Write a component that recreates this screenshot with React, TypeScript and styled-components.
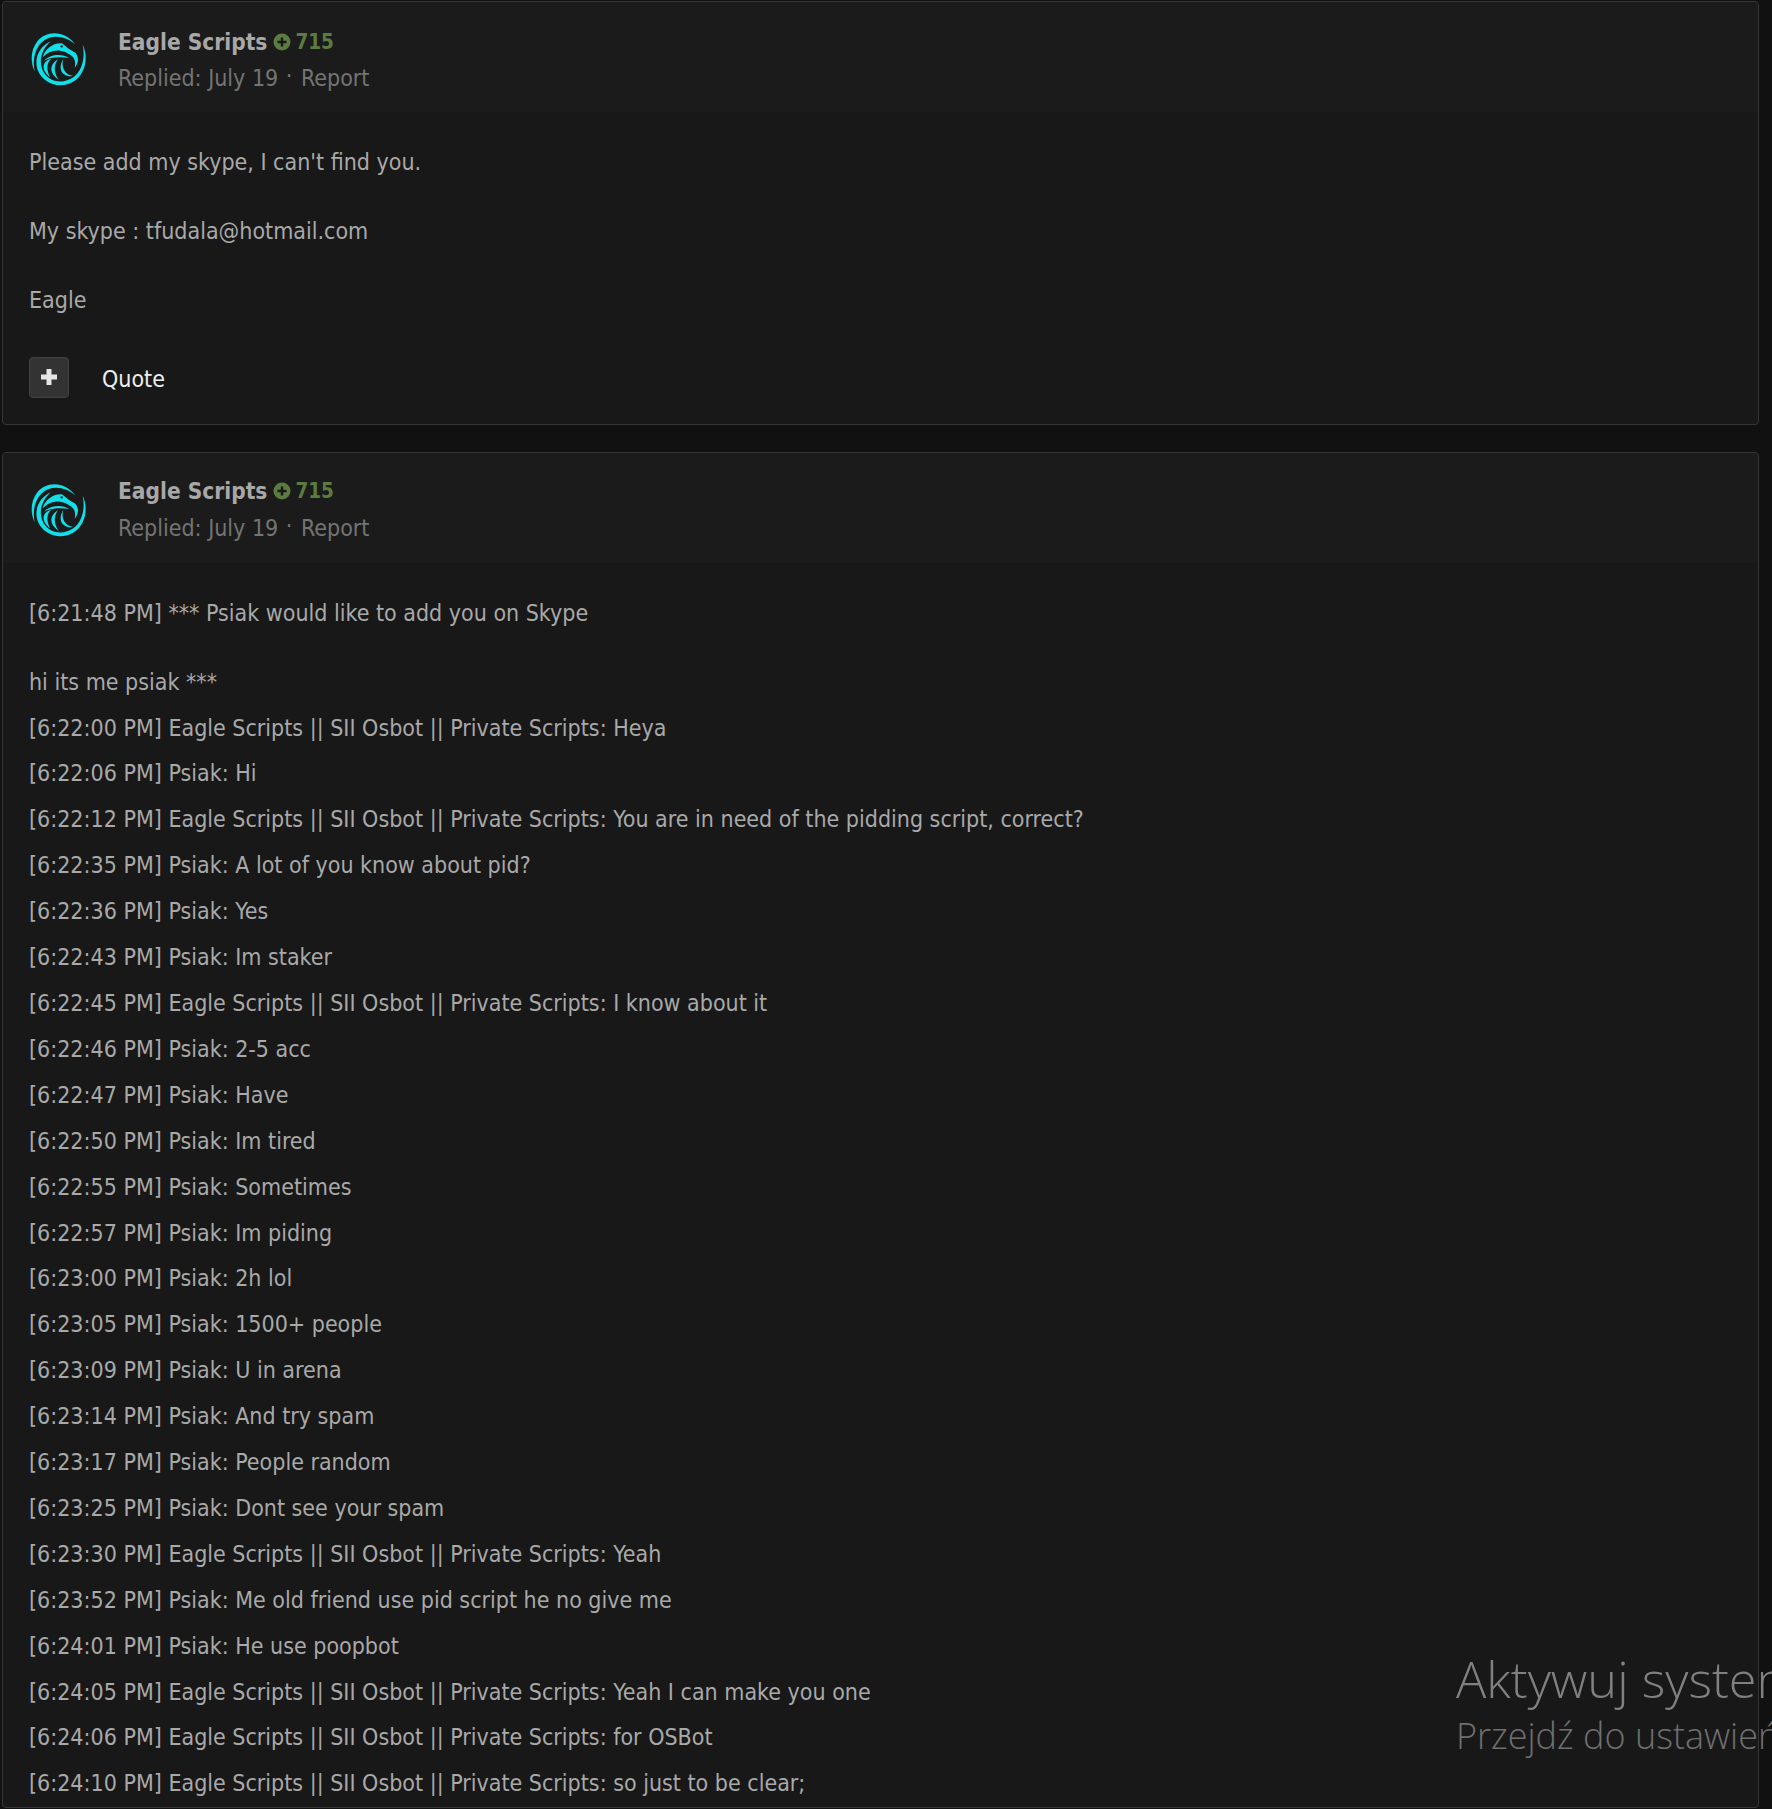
import React from "react";
import styled, { createGlobalStyle } from "styled-components";

const Global = createGlobalStyle`
  html, body { margin: 0; padding: 0; background: #111111; }
  body { font-family: "DejaVu Sans Condensed", "DejaVu Sans", sans-serif; font-stretch: condensed; }
`;

const Page = styled.div`
  position: relative;
  width: 1772px;
  height: 1809px;
  overflow: hidden;
  background: #111111;
  padding: 1px 13px 0 2px;
  box-sizing: border-box;
  display: flex;
  flex-direction: column;
  gap: 27px;
`;

const Card = styled.article`
  flex: none;
  background: #181818;
  border: 1px solid #363636;
  border-radius: 4px;
`;

const CardHeader = styled.header`
  height: 110px;
  box-sizing: border-box;
  display: flex;
  align-items: flex-start;
  padding: 26px 0 0 27px;
  gap: 30px;
  background: #1b1b1b;
  border-radius: 4px 4px 0 0;
`;

const Avatar = styled.svg`
  width: 58px;
  height: 58px;
  flex: none;
  margin-top: 2px;
`;

const Meta = styled.div<{ $lift: number }>`
  display: flex;
  flex-direction: column;
  gap: 9px;
  margin-top: ${(p) => p.$lift}px;
`;

const NameRow = styled.div`
  display: flex;
  align-items: center;
  gap: 6px;
  height: 27px;
`;

const Name = styled.span`
  font-size: 22.5px;
  font-weight: 700;
  color: #a8a8a8;
`;

const Rep = styled.span`
  display: inline-flex;
  align-items: center;
  gap: 4px;
  font-size: 20.5px;
  font-weight: 700;
  color: #5c7b40;
`;

const SubRow = styled.div`
  font-size: 23px;
  line-height: 28px;
  color: #747474;
`;

const Sep = styled.span`
  margin: 0 2px 0 1px;
  line-height: 0;
  vertical-align: 2px;
`;

const Body = styled.div`
  padding: 28px 26px 0;
  font-size: 23px;
  line-height: 45.9px;
  color: #a9a9a9;
`;

const Para = styled.p<{ $gap?: boolean }>`
  margin: 0 0 ${(p) => (p.$gap ? "23px" : "0")};
  white-space: nowrap;
`;

const Footer = styled.footer`
  display: flex;
  align-items: center;
  gap: 33px;
  padding: 33px 26px 26px;
`;

const PlusButton = styled.button`
  width: 40px;
  height: 41px;
  padding: 0;
  display: flex;
  align-items: center;
  justify-content: center;
  background: #333333;
  border: 1px solid #414141;
  border-radius: 4px;
`;

const Quote = styled.span`
  font-size: 23px;
  padding-top: 3px;
  color: #eeeeee;
`;

const Watermark = styled.div`
  position: absolute;
  left: 1456px;
  top: 1645px;
  white-space: nowrap;
  font-family: "Open Sans", sans-serif;
  font-weight: 300;
  font-stretch: normal;
`;

const WatermarkTitle = styled.div`
  font-size: 50.5px;
  line-height: 68px;
  color: #808080;
`;

const WatermarkSub = styled.div`
  font-size: 36px;
  line-height: 46px;
  color: #6f6f6f;
`;

const EagleLogo = () => (
  <Avatar viewBox="90 90 174 174" aria-hidden>
    <g fill="#10e0ea">
      <path d="M104 214 C90 185 92 150 112 124 C135 94 192 86 226 134 C196 106 150 102 124 128 C102 150 98 185 104 214 Z" />
      <path d="M248 134 C266 170 258 222 218 246 C178 268 130 250 114 212 C100 176 118 140 152 124 C128 146 116 176 126 206 C140 244 186 256 220 232 C248 212 256 170 248 134 Z" />
      <path d="M128 172 C134 148 158 128 186 130 L206 146 L226 158 C236 170 238 186 224 204 C228 186 224 172 210 164 L196 156 C170 146 146 152 128 172 Z" />
      <path d="M132 182 C150 162 186 160 208 174 C184 170 154 170 132 182 Z" />
      <path d="M150 232 C124 210 124 184 154 176 C138 190 140 210 150 232 Z" />
      <path d="M176 240 C148 220 146 196 174 178 C160 198 162 218 176 240 Z" />
      <path d="M220 228 C190 232 170 210 190 176 C182 204 196 224 220 228 Z" />
    </g>
    <circle cx="185" cy="139" r="3.5" fill="#1b1b1b" />
  </Avatar>
);

const PlusCircle = () => (
  <svg width="18" height="18" viewBox="0 0 18 18" aria-hidden>
    <circle cx="9" cy="9" r="8.5" fill="#5c7b40" />
    <path d="M9 4.5v9M4.5 9h9" stroke="#181818" strokeWidth="2.4" />
  </svg>
);

const PlusIcon = () => (
  <svg width="18" height="18" viewBox="0 0 18 18" aria-hidden>
    <path d="M9 1v16M1 9h16" stroke="#e6e6e6" strokeWidth="5" />
  </svg>
);

const PostHeader = ({ lift = 0 }: { lift?: number }) => (
  <CardHeader>
    <EagleLogo />
    <Meta $lift={lift}>
      <NameRow>
        <Name>Eagle Scripts</Name>
        <Rep>
          <PlusCircle />
          715
        </Rep>
      </NameRow>
      <SubRow>
        Replied: July 19 <Sep>·</Sep> Report
      </SubRow>
    </Meta>
  </CardHeader>
);

const chat: string[] = [
  "[6:22:00 PM] Eagle Scripts || SII Osbot || Private Scripts: Heya",
  "[6:22:06 PM] Psiak: Hi",
  "[6:22:12 PM] Eagle Scripts || SII Osbot || Private Scripts: You are in need of the pidding script, correct?",
  "[6:22:35 PM] Psiak: A lot of you know about pid?",
  "[6:22:36 PM] Psiak: Yes",
  "[6:22:43 PM] Psiak: Im staker",
  "[6:22:45 PM] Eagle Scripts || SII Osbot || Private Scripts: I know about it",
  "[6:22:46 PM] Psiak: 2-5 acc",
  "[6:22:47 PM] Psiak: Have",
  "[6:22:50 PM] Psiak: Im tired",
  "[6:22:55 PM] Psiak: Sometimes",
  "[6:22:57 PM] Psiak: Im piding",
  "[6:23:00 PM] Psiak: 2h lol",
  "[6:23:05 PM] Psiak: 1500+ people",
  "[6:23:09 PM] Psiak: U in arena",
  "[6:23:14 PM] Psiak: And try spam",
  "[6:23:17 PM] Psiak: People random",
  "[6:23:25 PM] Psiak: Dont see your spam",
  "[6:23:30 PM] Eagle Scripts || SII Osbot || Private Scripts: Yeah",
  "[6:23:52 PM] Psiak: Me old friend use pid script he no give me",
  "[6:24:01 PM] Psiak: He use poopbot",
  "[6:24:05 PM] Eagle Scripts || SII Osbot || Private Scripts: Yeah I can make you one",
  "[6:24:06 PM] Eagle Scripts || SII Osbot || Private Scripts: for OSBot",
  "[6:24:10 PM] Eagle Scripts || SII Osbot || Private Scripts: so just to be clear;",
];

export default function App() {
  return (
    <Page>
      <Global />
      <Card>
        <PostHeader />
        <Body>
          <Para $gap>Please add my skype, I can't find you.</Para>
          <Para $gap>My skype : tfudala@hotmail.com</Para>
          <Para>Eagle</Para>
        </Body>
        <Footer>
          <PlusButton aria-label="Add reputation">
            <PlusIcon />
          </PlusButton>
          <Quote>Quote</Quote>
        </Footer>
      </Card>
      <Card>
        <PostHeader lift={-1} />
        <Body>
          <Para $gap>[6:21:48 PM] *** Psiak would like to add you on Skype</Para>
          <Para>hi its me psiak ***</Para>
          {chat.map((line) => (
            <Para key={line}>{line}</Para>
          ))}
        </Body>
      </Card>
      <Watermark>
        <WatermarkTitle>Aktywuj system Windows</WatermarkTitle>
        <WatermarkSub>Przejdź do ustawień, aby aktywować system Windows.</WatermarkSub>
      </Watermark>
    </Page>
  );
}
